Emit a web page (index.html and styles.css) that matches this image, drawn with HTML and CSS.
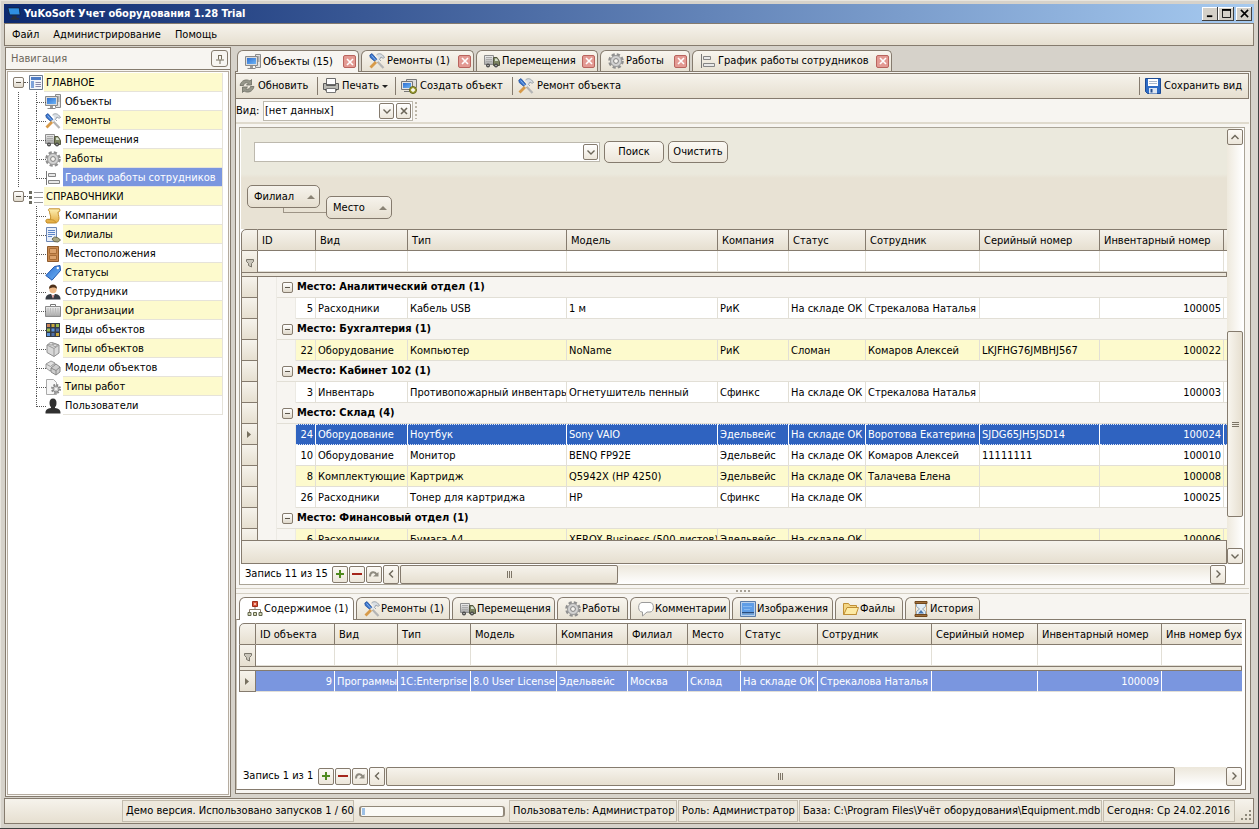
FILE: index.html
```html
<!DOCTYPE html>
<html lang="ru">
<head>
<meta charset="utf-8">
<title>YuKoSoft Учет оборудования 1.28 Trial</title>
<link rel="stylesheet" href="styles.css">
</head>
<body>
<svg class="defs" aria-hidden="true">
  <defs>
    <linearGradient id="g-blue" x1="0" y1="0" x2="1" y2="1"><stop offset="0" stop-color="#2f6fd0"/><stop offset="1" stop-color="#6db4f5"/></linearGradient>
    <linearGradient id="g-gray" x1="0" y1="0" x2="0" y2="1"><stop offset="0" stop-color="#f0f0f0"/><stop offset="1" stop-color="#a4a4a4"/></linearGradient>
    <linearGradient id="g-gold" x1="0" y1="0" x2="0" y2="1"><stop offset="0" stop-color="#fdf0b4"/><stop offset="1" stop-color="#e3a93c"/></linearGradient>
  </defs>
  <symbol id="i-objects" viewBox="0 0 16 16"><path d="M10.500 .5h5v13h-5z" fill="#e4e4e4" stroke="#8b8b8b"/><path d="M12 3h2.500M12 5h2.500M12 7h2.500" stroke="#777"/><path d="M.5 2.500h12v9H.5z" fill="#dcdcdc" stroke="#8a8a8a"/><path d="M2 4h9v6H2z" fill="url(#g-blue)"/><path d="M5 12h3v2H5z" fill="#999"/><path d="M2.500 14.500h8" stroke="#888"/></symbol>
  <symbol id="i-repair" viewBox="0 0 16 16"><path d="M14.500 15 5 5" stroke="#b4b4b4" stroke-width="2.200"/><path d="M.8 2 3 .6 8.500 7 6.500 9 1.200 4.500z" fill="#3672cc" stroke="#244f96" stroke-width=".7"/><path d="m2.500 2.500 4 4.500" stroke="#8db8ee"/><path d="M1.500 14.500 8 8" stroke="#d79a48" stroke-width="2.800"/><path d="m7 9 5-5" stroke="#dfe6ec" stroke-width="2.200"/><path d="M7.500 2c2-2 5.500-2 8 2.500l-1.500.8-2-1.300-1.500 2.500L12 8" fill="#d8dee4" stroke="#8c949c" stroke-width=".8"/></symbol>
  <symbol id="i-truck" viewBox="0 0 16 16"><path d="M.5 2.500h9v9h-9z" fill="url(#g-gray)" stroke="#8e8e8e"/><path d="M2 4.500h6M2 6.500h6M2 8.500h6" stroke="#aaa"/><path d="M9.500 4.500H13l2.500 4v4h-6z" fill="#7d8562" stroke="#53563f"/><path d="M11 5.500h2l1.300 2.500H11z" fill="#d8e2d0"/><circle cx="4" cy="12.500" r="2" fill="#444"/><circle cx="12" cy="12.500" r="2" fill="#444"/><circle cx="4" cy="12.500" r=".8" fill="#ccc"/><circle cx="12" cy="12.500" r=".8" fill="#ccc"/></symbol>
  <symbol id="i-gear" viewBox="0 0 16 16"><circle cx="8" cy="8" r="6.500" fill="none" stroke="#8f8f8f" stroke-width="2.600" stroke-dasharray="3.100 2.005"/><circle cx="8" cy="8" r="5.500" fill="#d2d2d2" stroke="#9a9a9a"/><circle cx="8" cy="8" r="2.400" fill="#f7f5f1" stroke="#808080"/></symbol>
  <symbol id="i-sched" viewBox="0 0 16 16"><path d="M1.500 1v14" stroke="#777"/><path d="M3.500 3.500h7v3h-7zM3.500 10.500h11v3h-11z" fill="#e8e8e8" stroke="#858585"/></symbol>
  <symbol id="i-main" viewBox="0 0 16 16"><path d="M1.500.500h13v14h-13z" fill="#f2f5fa" stroke="#6c7a8c"/><path d="M3 2h10v3H3z" fill="#4f7cc4"/><path d="M3 6h3v7H3z" fill="#7da2da"/><path d="M7.500 7.500H13M7.500 9.500H13M7.500 11.500H13" stroke="#88a"/></symbol>
  <symbol id="i-list" viewBox="0 0 16 16"><path d="M1 2h3v3H1zM1 7h3v3H1zM1 12h3v3H1z" fill="#6b6b60"/><path d="M6 3.500h9M6 8.500h9M6 13.500h9" stroke="#999"/></symbol>
  <symbol id="i-scroll" viewBox="0 0 16 16"><path d="M4 .8h10.500c1.200 2-.2 3.400-1.500 3.200 0 3 2 6 .5 8.500-.8 1.800-2 2.500-3 2.500H2c-1.700-1-1.300-3.500 0-3.700h3.500C6.500 8 4 5 4.500 3.200 3.300 3 3 1.500 4 .8z" fill="url(#g-gold)" stroke="#c48f2c"/><path d="M3 11.500c2 .5 7-.5 7.500 3" fill="none" stroke="#c48f2c"/></symbol>
  <symbol id="i-branch" viewBox="0 0 16 16"><path d="M1.500.5h10v14h-10z" fill="#e8effa" stroke="#6c86b4"/><path d="M3 3.500h7M3 5.500h7M3 7.500h7M3 9.500h4" stroke="#5d86c8"/><path d="m7 12 2.500-2 3 .5 3 2.500-2.500 2-4-.5z" fill="#a8a684" stroke="#6d6c4f"/></symbol>
  <symbol id="i-door" viewBox="0 0 16 16"><path d="M2.500.5h11v15h-11z" fill="#c98a51" stroke="#8f5a2b"/><path d="M4.500 2.500h7v5h-7zM4.500 9.500h7v4h-7z" fill="#dba26c" stroke="#a86c36"/></symbol>
  <symbol id="i-tag" viewBox="0 0 16 16"><path d="M.8 10.500 9.500 1.500l5.500-1 .5 5-8.500 9.700z" fill="url(#g-blue)" stroke="#2257ac"/><circle cx="12.800" cy="3" r="1.200" fill="#fff"/></symbol>
  <symbol id="i-person" viewBox="0 0 16 16"><path d="M.5 15.500c0-4 2-5 5-5.500h5c3 .5 5 1.500 5 5.500z" fill="#363b44"/><path d="m6 9.500 2 5 2-5z" fill="#fff"/><path d="m7.500 11 .5 4 .7-4z" fill="#b33"/><circle cx="8" cy="5.500" r="3.700" fill="#eeb988"/><path d="M4 5c-.5-6 8.500-6 8 0-1-2-6-2-8 0z" fill="#4d3019"/></symbol>
  <symbol id="i-case" viewBox="0 0 16 16"><path d="M5.500 4V1.500h5V4" fill="none" stroke="#777"/><path d="M.5 3.500h15v10H.5z" fill="url(#g-gray)" stroke="#8b8b8b"/><path d="M3 5v7M5.500 5v7M8 5v7M10.500 5v7M13 5v7" stroke="#bababa"/></symbol>
  <symbol id="i-kinds" viewBox="0 0 16 16"><path d="M1 1h14v14H1z" fill="#343c48"/><path d="M2 2h3v3H2z" fill="#cc8458"/><path d="M6.500 2h3v3h-3zM11 11h3v3h-3z" fill="#c9a83c"/><path d="M11 2h3v3h-3zM2 6.500h3v3H2z" fill="#9ab94c"/><path d="M6.500 6.500h3v3h-3zM2 11h3v3H2z" fill="#5d94dc"/><path d="M11 6.500h3v3h-3zM6.500 11h3v3h-3z" fill="#4f6fa8"/></symbol>
  <symbol id="i-brick" viewBox="0 0 16 16"><path d="m2 4 5-2.500L14 4v8l-5 3.500-7-4z" fill="#d8d8d8" stroke="#8d8d8d"/><path d="m2 4 7 3.500L14 4M9 7.500v8" fill="none" stroke="#9a9a9a"/><ellipse cx="6" cy="2.800" rx="2" ry="1.200" fill="#efefef" stroke="#999"/><ellipse cx="10" cy="4.200" rx="2" ry="1.200" fill="#efefef" stroke="#999"/></symbol>
  <symbol id="i-models" viewBox="0 0 16 16"><path d="m1 4 5-3 4 2v5l-5 3-4-3z" fill="#e0e0e0" stroke="#999"/><path d="m6 8 5-4 4 3v5l-4 3-5-3z" fill="#cdcdcd" stroke="#888"/><path d="m6 8 5 2.500L15 7M11 10.500V15" fill="none" stroke="#888"/><path d="m1 4 4.500 2.500L10 3" fill="none" stroke="#999"/></symbol>
  <symbol id="i-worktype" viewBox="0 0 16 16"><path d="M1.500.5h7l3 3v12h-10z" fill="#f6f6f6" stroke="#aaa"/><circle cx="11" cy="10" r="4" fill="none" stroke="#888" stroke-width="2" stroke-dasharray="1.700 1.450"/><circle cx="11" cy="10" r="3" fill="#ccc" stroke="#8b8b8b"/><circle cx="11" cy="10" r="1" fill="#fff"/></symbol>
  <symbol id="i-user" viewBox="0 0 16 16"><path d="M.5 15.500c-.3-4 2-5 5.500-5.500V8h4v2c3.500.5 5.800 1.500 5.500 5.500z" fill="#303030"/><ellipse cx="8" cy="5" rx="3.500" ry="4.500" fill="#303030"/></symbol>
  <symbol id="i-refresh" viewBox="0 0 16 16"><path d="M1 7.500C2 2.500 7 .5 11 3l1.500-1.500V7H7.500l1.700-1.700C7 4 5 5.500 4.500 7.500zM15 8.500c-1 5-6 7-10 4.500l-1.500 1.500V9h5l-1.700 1.700C9 12 11 10.500 11.500 8.500z" fill="#96968a" stroke="#6c6c62" stroke-width=".8"/></symbol>
  <symbol id="i-print" viewBox="0 0 16 16"><path d="M3.500.5h9v6h-9z" fill="#fdfdfd" stroke="#6b6b6b"/><path d="M.5 5.500h3v2h9v-2h3v6H.5z" fill="#b9b9b3" stroke="#5c5c5c"/><path d="M2 12h12" stroke="#333"/><path d="M3.500 10.500h9v4h-9z" fill="#fff" stroke="#777"/></symbol>
  <symbol id="i-create" viewBox="0 0 16 16"><path d="M5.500 1.500h10v8h-10z" fill="#ddd" stroke="#777"/><path d="M.5 3.500h11v8H.5z" fill="#e4e4e4" stroke="#777"/><path d="M2 5h8v5H2z" fill="url(#g-blue)"/><path d="M3 13.500h6" stroke="#777"/><circle cx="12" cy="12" r="3.500" fill="#a5a53c" stroke="#63661b"/><path d="M10 12h4M12 10v4" stroke="#fff" stroke-width="1.300"/></symbol>
  <symbol id="i-save" viewBox="0 0 16 16"><path d="M.5.5h15v15h-13l-2-2z" fill="#2f6cc4" stroke="#1c4a94"/><path d="M3 1h10v7H3z" fill="#fff"/><path d="M4 3.500h8M4 5.500h8" stroke="#a9b8cb"/><path d="M4 10h8v5.500H4z" fill="#dde6f2"/><path d="M5.500 11h2v3.500h-2z" fill="#234d8f"/></symbol>
  <symbol id="i-content" viewBox="0 0 16 16"><path d="M8 5v4M2.500 11V8.500h11V11" fill="none" stroke="#8a7a6a"/><path d="M5.500.5h5v5h-5z" fill="#d8543a" stroke="#9c2d1b"/><path d="M7 2h2v2H7z" fill="#f6b7a6"/><path d="M1 11.500h3v3H1zM6.500 11.500h3v3h-3zM12 11.500h3v3h-3z" fill="#d6d8b8" stroke="#62664c"/></symbol>
  <symbol id="i-comment" viewBox="0 0 16 16"><path d="M4 1.500h8c4.500 0 4.500 9.500 0 9.500H9l-4.500 4V11H4C-.5 11-.5 1.500 4 1.500z" fill="#fff" stroke="#9b9b9b"/></symbol>
  <symbol id="i-image" viewBox="0 0 16 16"><path d="M.5.500h15v15H.5z" fill="#b9d0ec" stroke="#5b7ca8"/><path d="M2 2h12v9H2z" fill="#5f9de6"/><path d="M2 11h12v1.500H2z" fill="#2a4c7c"/><path d="M2 12.500h12V14H2z" fill="#6fa4de"/><path d="M3 5.500h9M4 8.500h6" stroke="#86b8f0"/></symbol>
  <symbol id="i-folder" viewBox="0 0 16 16"><path d="M.5 13.500v-11h5l1.500 2h6.500v9z" fill="#f4d684" stroke="#c08f34"/><path d="M.8 13.500 4 6.500h11.500l-2.500 7z" fill="#fdeaa4" stroke="#c08f34"/></symbol>
  <symbol id="i-history" viewBox="0 0 16 16"><path d="M3.500 2.500v3l3 2.500-3 2.500v3h9v-3L9.500 8l3-2.500v-3z" fill="#e2edf6" stroke="#93a8b8"/><path d="M5 12.500 8 9l3 3.500z" fill="#4977ae"/><path d="M2 .5h12v2H2zM2 13.500h12v2H2z" fill="#a2713c" stroke="#70471d"/><path d="M2.500 3v10M13.500 3v10" stroke="#c3a27a"/></symbol>
  <symbol id="i-funnel" viewBox="0 0 8 9"><path d="M.5.500h7v2l-2 2v3.500l-3-1.500v-2l-2-2z" fill="#c9c5ba" stroke="#7b776c"/></symbol>
  <symbol id="i-x" viewBox="0 0 8 8"><path d="m1 1 6 6M7 1 1 7" stroke="currentColor" stroke-width="1.600"/></symbol>
  <symbol id="i-down" viewBox="0 0 8 8"><path d="m.500 2.500 3.500 3.500 3.500-3.500" fill="none" stroke="currentColor" stroke-width="1.400"/></symbol>
  <symbol id="i-up" viewBox="0 0 8 8"><path d="M.500 6 4 2.500 7.500 6" fill="none" stroke="currentColor" stroke-width="1.400"/></symbol>
  <symbol id="i-left" viewBox="0 0 8 8"><path d="M6 .500 2.500 4 6 7.500" fill="none" stroke="currentColor" stroke-width="1.400"/></symbol>
  <symbol id="i-right" viewBox="0 0 8 8"><path d="M2.500.500 6 4 2.500 7.500" fill="none" stroke="currentColor" stroke-width="1.400"/></symbol>
  <symbol id="i-plus" viewBox="0 0 10 10"><path d="M5 1v8M1 5h8" stroke="#4f8a1f" stroke-width="2"/></symbol>
  <symbol id="i-minus" viewBox="0 0 10 10"><path d="M0 5h10" stroke="#a5261c" stroke-width="2"/></symbol>
  <symbol id="i-redo" viewBox="0 0 10 10"><path d="M1 7.500c0-5 5-5.500 6.500-2" fill="none" stroke="#8f8b80" stroke-width="2"/><path d="M4 7.500h5.500V3z" fill="#8f8b80"/></symbol>
  <symbol id="i-pin" viewBox="0 0 10 10"><path d="M3.500 1v4.500M3 1.500h4M6.500 1v4.500M1 6h8M5 6v4" fill="none" stroke="#77705f"/></symbol>
  <symbol id="i-play" viewBox="0 0 5 7"><path d="M0 0v7l4-3.500z" fill="#77705f"/></symbol>
</svg>

<div class="window">
  <header class="titlebar">
    <svg class="app-icon" viewBox="0 0 16 16"><path d="M1 1h13l1 8H3z" fill="#2f8fe0" stroke="#12233d"/><path d="M6 10h5v3H6z" fill="#27303c"/><path d="M4 13.500h10" stroke="#27303c" stroke-width="2"/></svg>
    <h1 class="title">YuKoSoft Учет оборудования 1.28 Trial</h1>
    <div class="winbtns">
      <button class="winbtn" aria-label="Свернуть"><svg viewBox="0 0 10 10"><path d="M1 8h6" stroke="#000" stroke-width="2"/></svg></button>
      <button class="winbtn" aria-label="Развернуть"><svg viewBox="0 0 10 10"><path d="M.5 1h9v8.500h-9z" fill="none" stroke="#000"/><path d="M0 1h10" stroke="#000" stroke-width="2"/></svg></button>
      <button class="winbtn winbtn-close" aria-label="Закрыть"><svg viewBox="0 0 10 10"><path d="m1 1 8 8M9 1 1 9" stroke="#000" stroke-width="1.700"/></svg></button>
    </div>
  </header>

  <nav class="menubar">
    <button class="menu-item">Файл</button><button class="menu-item">Администрирование</button><button class="menu-item">Помощь</button>
  </nav>

  <div class="main">
    <aside class="nav">
      <div class="nav-head"><span>Навигация</span><button class="pin" aria-label="Закрепить"><svg><use href="#i-pin"/></svg></button></div>
      <div class="nav-body">
        <ul class="tree">
          <li class="branch">
            <div class="root alt"><button class="toggle" aria-label="Свернуть"></button><i class="dots"></i><svg class="icon"><use href="#i-main"/></svg><span class="label">ГЛАВНОЕ</span></div>
            <ul class="leaves">
              <li class="leaf"><svg class="icon"><use href="#i-objects"/></svg><a class="label" href="#">Объекты</a></li>
              <li class="leaf alt"><svg class="icon"><use href="#i-repair"/></svg><a class="label" href="#">Ремонты</a></li>
              <li class="leaf"><svg class="icon"><use href="#i-truck"/></svg><a class="label" href="#">Перемещения</a></li>
              <li class="leaf alt"><svg class="icon"><use href="#i-gear"/></svg><a class="label" href="#">Работы</a></li>
              <li class="leaf current"><svg class="icon"><use href="#i-sched"/></svg><a class="label" href="#">График работы сотрудников</a></li>
            </ul>
          </li>
          <li class="branch">
            <div class="root alt"><button class="toggle" aria-label="Свернуть"></button><i class="dots"></i><svg class="icon"><use href="#i-list"/></svg><span class="label">СПРАВОЧНИКИ</span></div>
            <ul class="leaves">
              <li class="leaf"><svg class="icon"><use href="#i-scroll"/></svg><a class="label" href="#">Компании</a></li>
              <li class="leaf alt"><svg class="icon"><use href="#i-branch"/></svg><a class="label" href="#">Филиалы</a></li>
              <li class="leaf"><svg class="icon"><use href="#i-door"/></svg><a class="label" href="#">Местоположения</a></li>
              <li class="leaf alt"><svg class="icon"><use href="#i-tag"/></svg><a class="label" href="#">Статусы</a></li>
              <li class="leaf"><svg class="icon"><use href="#i-person"/></svg><a class="label" href="#">Сотрудники</a></li>
              <li class="leaf alt"><svg class="icon"><use href="#i-case"/></svg><a class="label" href="#">Организации</a></li>
              <li class="leaf"><svg class="icon"><use href="#i-kinds"/></svg><a class="label" href="#">Виды объектов</a></li>
              <li class="leaf alt"><svg class="icon"><use href="#i-brick"/></svg><a class="label" href="#">Типы объектов</a></li>
              <li class="leaf"><svg class="icon"><use href="#i-models"/></svg><a class="label" href="#">Модели объектов</a></li>
              <li class="leaf alt"><svg class="icon"><use href="#i-worktype"/></svg><a class="label" href="#">Типы работ</a></li>
              <li class="leaf"><svg class="icon"><use href="#i-user"/></svg><a class="label" href="#">Пользователи</a></li>
            </ul>
          </li>
        </ul>
      </div>
    </aside>

    <main class="work">
      <div class="tabs">
        <div class="tab active w-objects"><button class="tab-btn"><svg class="icon"><use href="#i-objects"/></svg>Объекты (15)</button><button class="tab-x" aria-label="Закрыть"><svg><use href="#i-x"/></svg></button></div>
        <div class="tab w-repairs"><button class="tab-btn"><svg class="icon"><use href="#i-repair"/></svg>Ремонты (1)</button><button class="tab-x" aria-label="Закрыть"><svg><use href="#i-x"/></svg></button></div>
        <div class="tab w-moves"><button class="tab-btn"><svg class="icon"><use href="#i-truck"/></svg>Перемещения</button><button class="tab-x" aria-label="Закрыть"><svg><use href="#i-x"/></svg></button></div>
        <div class="tab w-works"><button class="tab-btn"><svg class="icon"><use href="#i-gear"/></svg>Работы</button><button class="tab-x" aria-label="Закрыть"><svg><use href="#i-x"/></svg></button></div>
        <div class="tab w-sched"><button class="tab-btn"><svg class="icon"><use href="#i-sched"/></svg>График работы сотрудников</button><button class="tab-x" aria-label="Закрыть"><svg><use href="#i-x"/></svg></button></div>
      </div>

      <div class="panel">
        <div class="toolbar">
          <button class="tool w-refresh"><svg class="icon"><use href="#i-refresh"/></svg>Обновить</button>
          <button class="tool w-print"><svg class="icon"><use href="#i-print"/></svg>Печать<i class="caret"></i></button>
          <button class="tool w-create"><svg class="icon"><use href="#i-create"/></svg>Создать объект</button>
          <button class="tool tool-last"><svg class="icon"><use href="#i-repair"/></svg>Ремонт объекта</button>
          <button class="tool tool-save"><svg class="icon"><use href="#i-save"/></svg>Сохранить вид</button>
        </div>
        <div class="viewbar">
          <label for="view">Вид:</label>
          <div class="combo combo-view"><input id="view" value="[нет данных]"><button class="mini" aria-label="Открыть"><svg><use href="#i-down"/></svg></button><button class="mini" aria-label="Очистить"><svg><use href="#i-x"/></svg></button></div>
          <i class="grip"></i>
        </div>

        <section class="objects">
          <div class="objects-row">
            <div class="grid">
              <div class="finder">
                <div class="search">
                  <div class="combo combo-search"><input aria-label="Поиск"><button class="mini" aria-label="Открыть"><svg><use href="#i-down"/></svg></button></div>
                  <button class="push">Поиск</button><button class="push">Очистить</button>
                </div>
                <div class="groups">
                  <button class="chip chip-a">Филиал<i class="sort"></i></button><i class="link"></i><button class="chip chip-b">Место<i class="sort"></i></button>
                </div>
              </div>
              <div class="table-clip table-head">
                <table class="table">
                  <colgroup><col class="c-ind"><col class="c-58"><col class="c-92"><col class="c-159"><col class="c-151"><col class="c-71"><col class="c-77"><col class="c-114"><col class="c-120"><col class="c-124"><col></colgroup>
                  <thead>
                    <tr><th class="corner"></th><th>ID</th><th>Вид</th><th>Тип</th><th>Модель</th><th>Компания</th><th>Статус</th><th>Сотрудник</th><th>Серийный номер</th><th>Инвентарный номер</th><th></th></tr>
                    <tr class="filter"><td class="ind"><svg class="funnel"><use href="#i-funnel"/></svg></td><td></td><td></td><td></td><td></td><td></td><td></td><td></td><td></td><td></td><td></td></tr>
                  </thead>
                </table>
              </div>
              <div class="rule"></div>
              <div class="table-clip table-body">
                <table class="table">
                  <colgroup><col class="c-ind"><col class="c-19"><col class="c-19"><col class="c-20"><col class="c-92"><col class="c-159"><col class="c-151"><col class="c-71"><col class="c-77"><col class="c-114"><col class="c-120"><col class="c-124"><col></colgroup>
                  <tbody>
                    <tr class="group"><td class="ind"></td><td class="pad"></td><td class="gcell" colspan="11"><div class="ghead"><button class="toggle" aria-label="Свернуть"></button>Место: Аналитический отдел (1)</div></td></tr>
                    <tr><td class="ind"></td><td class="pad"></td><td class="pad"></td><td class="num">5</td><td>Расходники</td><td>Кабель USB</td><td>1 м</td><td>РиК</td><td>На складе ОК</td><td>Стрекалова Наталья</td><td></td><td class="num">100005</td><td></td></tr>
                    <tr class="group"><td class="ind"></td><td class="pad"></td><td class="gcell" colspan="11"><div class="ghead"><button class="toggle" aria-label="Свернуть"></button>Место: Бухгалтерия (1)</div></td></tr>
                    <tr class="odd"><td class="ind"></td><td class="pad"></td><td class="pad"></td><td class="num">22</td><td>Оборудование</td><td>Компьютер</td><td>NoName</td><td>РиК</td><td>Сломан</td><td>Комаров Алексей</td><td>LKJFHG76JMBHJ567</td><td class="num">100022</td><td></td></tr>
                    <tr class="group"><td class="ind"></td><td class="pad"></td><td class="gcell" colspan="11"><div class="ghead"><button class="toggle" aria-label="Свернуть"></button>Место: Кабинет 102 (1)</div></td></tr>
                    <tr><td class="ind"></td><td class="pad"></td><td class="pad"></td><td class="num">3</td><td>Инвентарь</td><td>Противопожарный инвентарь</td><td>Огнетушитель пенный</td><td>Сфинкс</td><td>На складе ОК</td><td>Стрекалова Наталья</td><td></td><td class="num">100003</td><td></td></tr>
                    <tr class="group"><td class="ind"></td><td class="pad"></td><td class="gcell" colspan="11"><div class="ghead"><button class="toggle" aria-label="Свернуть"></button>Место: Склад (4)</div></td></tr>
                    <tr class="selected"><td class="ind"><svg class="play"><use href="#i-play"/></svg></td><td class="pad"></td><td class="pad"></td><td class="num">24</td><td>Оборудование</td><td>Ноутбук</td><td>Sony VAIO</td><td>Эдельвейс</td><td>На складе ОК</td><td>Воротова Екатерина</td><td>SJDG65JH5JSD14</td><td class="num">100024</td><td></td></tr>
                    <tr><td class="ind"></td><td class="pad"></td><td class="pad"></td><td class="num">10</td><td>Оборудование</td><td>Монитор</td><td>BENQ FP92E</td><td>Эдельвейс</td><td>На складе ОК</td><td>Комаров Алексей</td><td>11111111</td><td class="num">100010</td><td></td></tr>
                    <tr class="odd"><td class="ind"></td><td class="pad"></td><td class="pad"></td><td class="num">8</td><td>Комплектующие</td><td>Картридж</td><td>Q5942X (HP 4250)</td><td>Эдельвейс</td><td>На складе ОК</td><td>Талачева Елена</td><td></td><td class="num">100008</td><td></td></tr>
                    <tr><td class="ind"></td><td class="pad"></td><td class="pad"></td><td class="num">26</td><td>Расходники</td><td>Тонер для картриджа</td><td>HP</td><td>Сфинкс</td><td>На складе ОК</td><td></td><td></td><td class="num">100025</td><td></td></tr>
                    <tr class="group"><td class="ind"></td><td class="pad"></td><td class="gcell" colspan="11"><div class="ghead"><button class="toggle" aria-label="Свернуть"></button>Место: Финансовый отдел (1)</div></td></tr>
                    <tr class="odd"><td class="ind"></td><td class="pad"></td><td class="pad"></td><td class="num">6</td><td>Расходники</td><td>Бумага A4</td><td>XEROX Business (500 листов)</td><td>Эдельвейс</td><td>На складе ОК</td><td></td><td></td><td class="num">100006</td><td></td></tr>
                  </tbody>
                </table>
              </div>
              <div class="footer-band"></div>
            </div>
            <div class="vscroll">
              <button class="arrow" aria-label="Вверх"><svg><use href="#i-up"/></svg></button>
              <div class="vtrack"><div class="vthumb"></div></div>
              <button class="arrow" aria-label="Вниз"><svg><use href="#i-down"/></svg></button>
            </div>
          </div>
          <div class="record record-top">
            <span class="record-label">Запись 11 из 15</span>
            <button class="step" aria-label="Добавить"><svg><use href="#i-plus"/></svg></button><button class="step" aria-label="Удалить"><svg><use href="#i-minus"/></svg></button><button class="step" aria-label="Повторить"><svg><use href="#i-redo"/></svg></button>
            <button class="arrow" aria-label="Влево"><svg><use href="#i-left"/></svg></button>
            <div class="htrack"><div class="hthumb hthumb-top"></div></div>
            <button class="arrow" aria-label="Вправо"><svg><use href="#i-right"/></svg></button>
          </div>
        </section>

        <div class="splitter"><i></i><i></i><i></i><i></i></div>

        <section class="details">
          <div class="tabs tabs-bottom">
            <div class="tab active b-content"><button class="tab-btn"><svg class="icon"><use href="#i-content"/></svg>Содержимое (1)</button></div>
            <div class="tab b-repairs"><button class="tab-btn"><svg class="icon"><use href="#i-repair"/></svg>Ремонты (1)</button></div>
            <div class="tab b-moves"><button class="tab-btn"><svg class="icon"><use href="#i-truck"/></svg>Перемещения</button></div>
            <div class="tab b-works"><button class="tab-btn"><svg class="icon"><use href="#i-gear"/></svg>Работы</button></div>
            <div class="tab b-comments"><button class="tab-btn"><svg class="icon"><use href="#i-comment"/></svg>Комментарии</button></div>
            <div class="tab b-images"><button class="tab-btn"><svg class="icon"><use href="#i-image"/></svg>Изображения</button></div>
            <div class="tab b-files"><button class="tab-btn"><svg class="icon"><use href="#i-folder"/></svg>Файлы</button></div>
            <div class="tab b-history"><button class="tab-btn"><svg class="icon"><use href="#i-history"/></svg>История</button></div>
          </div>
          <div class="details-box">
            <div class="details-grid">
              <div class="table-clip table-head">
                <table class="table">
                  <colgroup><col class="c-ind"><col class="c-79"><col class="c-63"><col class="c-73"><col class="c-86"><col class="c-71"><col class="c-60"><col class="c-53"><col class="c-77"><col class="c-114"><col class="c-106"><col class="c-124"><col></colgroup>
                  <thead>
                    <tr><th class="corner"></th><th>ID объекта</th><th>Вид</th><th>Тип</th><th>Модель</th><th>Компания</th><th>Филиал</th><th>Место</th><th>Статус</th><th>Сотрудник</th><th>Серийный номер</th><th>Инвентарный номер</th><th>Инв номер бухгалтерии</th></tr>
                    <tr class="filter"><td class="ind"><svg class="funnel"><use href="#i-funnel"/></svg></td><td></td><td></td><td></td><td></td><td></td><td></td><td></td><td></td><td></td><td></td><td></td><td></td></tr>
                  </thead>
                </table>
              </div>
              <div class="rule"></div>
              <div class="table-clip table-body plain">
                <table class="table">
                  <colgroup><col class="c-ind"><col class="c-79"><col class="c-63"><col class="c-73"><col class="c-86"><col class="c-71"><col class="c-60"><col class="c-53"><col class="c-77"><col class="c-114"><col class="c-106"><col class="c-124"><col></colgroup>
                  <tbody>
                    <tr class="focused"><td class="ind"><svg class="play"><use href="#i-play"/></svg></td><td class="num">9</td><td>Программы</td><td>1C:Enterprise</td><td>8.0 User License</td><td>Эдельвейс</td><td>Москва</td><td>Склад</td><td>На складе ОК</td><td>Стрекалова Наталья</td><td></td><td class="num">100009</td><td></td></tr>
                  </tbody>
                </table>
              </div>
              <div class="record record-bottom">
                <span class="record-label">Запись 1 из 1</span>
                <button class="step" aria-label="Добавить"><svg><use href="#i-plus"/></svg></button><button class="step" aria-label="Удалить"><svg><use href="#i-minus"/></svg></button><button class="step" aria-label="Повторить"><svg><use href="#i-redo"/></svg></button>
                <button class="arrow" aria-label="Влево"><svg><use href="#i-left"/></svg></button>
                <div class="htrack"><div class="hthumb hthumb-bottom"></div></div>
                <button class="arrow" aria-label="Вправо"><svg><use href="#i-right"/></svg></button>
              </div>
            </div>
          </div>
        </section>
      </div>
    </main>
  </div>

  <footer class="status">
    <span class="cell s-demo">Демо версия. Использовано запусков 1 / 60</span>
    <span class="progress"><i></i></span>
    <span class="cell s-user">Пользователь: Администратор</span>
    <span class="cell s-role">Роль: Администратор</span>
    <span class="cell s-base">База: C:\Program Files\Учёт оборудования\Equipment.mdb</span>
    <span class="cell s-date">Сегодня: Ср 24.02.2016</span>
    <svg class="sizer" viewBox="0 0 12 12"><path d="M9 1h2v2H9zM5 5h2v2H5zM9 5h2v2H9zM1 9h2v2H1zM5 9h2v2H5zM9 9h2v2H9z" fill="#8d887a"/></svg>
  </footer>
</div>
</body>
</html>
```

FILE: styles.css
```css
:root {
  --line: #857b6e;
  --soft: #d9d5cb;
  --face: #ece7db;
  --pale: #f7f5f1;
  --grad: linear-gradient(#f6f3ec, #e6dfd0);
  --yellow: #fdfacd;
}

* { box-sizing: border-box; }

html, body { height: 100%; margin: 0; }

body, button, input, table {
  font-family: "DejaVu Sans Condensed", "DejaVu Sans", sans-serif;
  font-size: 11px;
  line-height: 14px;
  color: #000;
}

button { margin: 0; padding: 0; border: 0; background: none; white-space: nowrap; }
ul { margin: 0; padding: 0; list-style: none; }
a { color: inherit; text-decoration: none; }
.defs { position: absolute; width: 0; height: 0; }
.icon { width: 16px; height: 16px; flex: none; }

.window {
  display: flex;
  flex-direction: column;
  height: 100vh;
  padding: 4px 5px 5px 4px;
  background: #d6d2ca;
  box-shadow: inset -1px -1px #404040, inset 1px 1px #e8e5de;
  overflow: hidden;
}

/* Title bar */
.titlebar {
  display: flex;
  align-items: center;
  flex: none;
  height: 19px;
  padding: 0 2px 0 3px;
  background: linear-gradient(90deg, #0d2a70, #a6caf0);
}
.app-icon { width: 14px; height: 14px; margin-right: 3px; }
.title { flex: 1; margin: 0; font-size: 11px; font-weight: bold; color: #fff; }
.winbtns { display: flex; }
.winbtn {
  display: grid;
  place-items: center;
  width: 16px;
  height: 14px;
  background: #d4d0c8;
  box-shadow: inset -1px -1px #404040, inset 1px 1px #fff;
}
.winbtn svg { width: 9px; height: 9px; }
.winbtn-close { margin-left: 2px; }

/* Menu */
.menubar {
  display: flex;
  flex: none;
  height: 23px;
  padding: 0 7px;
  gap: 14px;
  background: var(--grad);
  border: 1px solid var(--line);
}

/* Main split */
.main {
  display: grid;
  grid-template-columns: 226px minmax(0, 1fr);
  gap: 4px;
  flex: 1;
  min-height: 0;
  padding: 1px 3px 1px 1px;
}

/* Navigation */
.nav {
  display: flex;
  flex-direction: column;
  min-height: 0;
  border: 1px solid var(--line);
  background: var(--pale);
}
.nav-head {
  display: flex;
  align-items: center;
  justify-content: space-between;
  flex: none;
  height: 22px;
  padding: 0 2px 0 5px;
  color: #6d675c;
  border-bottom: 1px solid var(--line);
}
.pin {
  display: grid;
  place-items: center;
  width: 17px;
  height: 17px;
  border: 1px solid var(--line);
  border-radius: 3px;
}
.pin svg { width: 10px; height: 10px; }
.nav-body {
  flex: 1;
  margin: 1px;
  padding: 1px 5px 0 4px;
  background: #fff;
  border: 1px solid #b5aca0;
}
.root, .leaf { display: flex; align-items: center; height: 19px; }
.root .label, .leaf .label {
  flex: 1;
  height: 19px;
  padding: 1px 2px 0;
  line-height: 17px;
  white-space: nowrap;
  border-bottom: 1px solid #e6e3da;
  border-right: 1px solid #e6e3da;
}
.alt .label { background: var(--yellow); }
.current .label { background: #7a96df; color: #fff; }
.dots { width: 4px; border-top: 1px dotted #555; }
.leaf { position: relative; padding-left: 33px; }
.leaf .icon { margin-right: 2px; }
.leaf::before {
  content: "";
  position: absolute;
  left: 24px;
  top: 0;
  width: 9px;
  height: 10px;
  border: dotted #555;
  border-width: 0 0 1px 1px;
}
.leaf:not(:last-child)::after {
  content: "";
  position: absolute;
  left: 24px;
  top: 10px;
  height: 9px;
  border-left: 1px dotted #555;
}
.branch:first-child .leaves { background: linear-gradient(#555 50%, transparent 50%) 6px 0 / 1px 2px repeat-y; }
.toggle {
  display: grid;
  place-items: center;
  flex: none;
  width: 11px;
  height: 11px;
  background: linear-gradient(#fff, #e0d9cb);
  border: 1px solid var(--line);
  border-radius: 2px;
}
.toggle::before { content: ""; width: 5px; height: 1px; background: #5c564b; }
.root .toggle { margin-left: 1px; }

/* Tabs */
.work { display: flex; flex-direction: column; min-width: 0; min-height: 0; padding: 3px 0; }
.tabs { display: flex; flex: none; gap: 2px; height: 21px; padding-left: 2px; }
.tab {
  display: flex;
  align-items: center;
  flex: none;
  padding: 0 2px 0 7px;
  background: linear-gradient(#f8f5ee, #e8e2d4);
  border: 1px solid var(--line);
  border-bottom: 0;
  border-radius: 6px 5px 0 0;
}
.tab.active { position: relative; margin-bottom: -1px; background: var(--pale); }
.tab-btn { display: flex; align-items: center; flex: 1; gap: 2px; }
.tab-x {
  display: grid;
  place-items: center;
  width: 13px;
  height: 13px;
  color: #fff;
  background: #e39a93;
  border: 1px solid #b9645e;
  border-radius: 2px;
}
.tab-x svg { width: 8px; height: 8px; }
.w-objects { width: 122px; }
.w-repairs { width: 113px; }
.w-moves { width: 122px; }
.w-works { width: 90px; }
.w-sched { width: 200px; }

.panel {
  display: flex;
  flex-direction: column;
  flex: 1;
  min-height: 0;
  padding: 1px 1px 3px 0;
  background: var(--pale);
  border: 1px solid var(--line);
}

/* Toolbar */
.toolbar {
  display: flex;
  align-items: center;
  flex: none;
  height: 26px;
  padding: 0 6px 0 3px;
  background: var(--grad);
  border: 1px solid var(--line);
  border-left: 0;
}
.tool { display: flex; align-items: center; gap: 3px; height: 18px; padding-left: 5px; border-left: 1px solid var(--line); }
.tool:first-child { padding-left: 0; border-left: 0; }
.w-refresh { width: 78px; }
.w-print { width: 78px; }
.w-create { width: 117px; }
.tool-save { margin-left: auto; }
.caret { border: 3px solid transparent; border-top-color: #222; border-bottom: 0; }

.viewbar {
  display: flex;
  align-items: center;
  flex: none;
  height: 25px;
  border-bottom: 2px solid #dfdacd;
}
.viewbar label { width: 27px; }
.combo {
  display: flex;
  align-items: center;
  gap: 2px;
  height: 20px;
  padding-right: 1px;
  background: #fff;
  border: 1px solid #bdb9ae;
}
.combo input { flex: 1; min-width: 0; height: 16px; padding: 0 1px; border: 0; outline: 0; background: none; }
.combo-view { width: 150px; }
.combo-search { width: 346px; }
.mini {
  display: grid;
  place-items: center;
  width: 15px;
  height: 16px;
  color: #6c6659;
  background: linear-gradient(#fff, #ece6da);
  border: 1px solid var(--line);
  border-radius: 2px;
}
.mini svg, .arrow svg { width: 8px; height: 8px; }
.grip { width: 2px; height: 17px; margin-left: 2px; background: linear-gradient(#bdb7a9 50%, transparent 50%) 0 0 / 2px 4px; }

/* Objects grid */
.objects {
  display: flex;
  flex-direction: column;
  flex: 1;
  min-height: 0;
  margin: 3px 4px 0 3px;
  padding: 0 1px;
  background: #fff;
  border: 1px solid #aaa497;
}
.objects-row { display: flex; flex: 1; min-height: 0; }
.grid { display: flex; flex-direction: column; flex: 1; min-width: 0; }
.finder {
  flex: none;
  height: 101px;
  padding: 13px 13px 0 6px;
  background: linear-gradient(#ebe9dd 0, #ebe9dd 46px, #e8e2d4 50px);
}
.search { display: flex; align-items: center; gap: 4px; padding-left: 7px; }
.push {
  width: 60px;
  height: 22px;
  background: linear-gradient(#fbf9f4, #ece6da);
  border: 1px solid var(--line);
  border-radius: 5px;
}
.groups { display: flex; padding-top: 22px; }
.chip {
  display: flex;
  align-items: center;
  justify-content: space-between;
  height: 23px;
  padding: 0 4px 0 6px;
  background: var(--grad);
  border: 1px solid var(--line);
  border-radius: 5px;
}
.chip-a { width: 73px; }
.chip-b { width: 66px; margin-top: 11px; }
.sort { border: 4px solid transparent; border-top: 0; border-bottom-color: #8a8375; }
.link { width: 43px; height: 5px; margin: 23px 0 0 -37px; border: 1px solid #9d9486; border-width: 0 0 1px 1px; }
.link + .chip { position: relative; }

.table-clip { flex: none; overflow: hidden; }
.table-body { flex: 1; min-height: 0; background: var(--pale); }
.table-body.plain { background: #fff; }
.table { width: 100%; table-layout: fixed; border-collapse: separate; border-spacing: 0; }
.c-ind { width: 17px; }
.c-19 { width: 19px; }
.c-20 { width: 20px; }
.c-53 { width: 53px; }
.c-58 { width: 58px; }
.c-60 { width: 60px; }
.c-63 { width: 63px; }
.c-71 { width: 71px; }
.c-73 { width: 73px; }
.c-77 { width: 77px; }
.c-79 { width: 79px; }
.c-86 { width: 86px; }
.c-92 { width: 92px; }
.c-106 { width: 106px; }
.c-114 { width: 114px; }
.c-120 { width: 120px; }
.c-124 { width: 124px; }
.c-151 { width: 151px; }
.c-159 { width: 159px; }
.table th {
  height: 22px;
  padding: 2px 0 0 4px;
  font-weight: normal;
  text-align: left;
  white-space: nowrap;
  overflow: hidden;
  background: var(--grad);
  border: 1px solid var(--line);
  border-width: 1px 1px 1px 0;
}
.table th:last-child, .table td:last-child { border-right: 0; }
.table th.corner { border-left-width: 1px; border-top-left-radius: 5px; }
.table td {
  height: 21px;
  padding: 1px 2px 0;
  white-space: nowrap;
  overflow: hidden;
  background: #fff;
  border: 1px solid #e2dfd6;
  border-width: 0 1px 1px 0;
}
.table td.ind {
  padding: 0;
  text-align: center;
  background: var(--grad);
  border: 1px solid var(--line);
  border-width: 0 1px 1px 1px;
}
.filter td.ind { border-bottom: 0; }
.funnel { display: block; width: 8px; height: 9px; margin: 3px auto 0; }
.play { display: block; width: 5px; height: 7px; margin: 0 auto; }
.table td.num { text-align: right; }
.table td.pad { background: var(--pale); border-bottom: 0; border-right-color: #eceae4; }
.table .odd td:not(.ind):not(.pad) { background: var(--yellow); }
.table td.gcell { padding: 0 0 0 5px; font-weight: bold; background: var(--pale); }
.ghead { display: flex; align-items: center; gap: 4px; }
.table .selected td:not(.ind):not(.pad) {
  color: #fff;
  background: #2f63c0;
  border-right-color: #fff;
  border-top: 1px dotted #dfe8fa;
  border-bottom: 1px dotted #dfe8fa;
}
.table .focused td:not(.ind) { color: #fff; background: #7a96df; border-right-color: #fff; }
.rule { flex: none; height: 5px; background: var(--face); border: 1px solid var(--line); }
.footer-band { flex: none; height: 24px; background: var(--grad); border: 1px solid var(--line); }

/* Scroll bars */
.vscroll { display: flex; flex-direction: column; flex: none; width: 16px; padding-top: 1px; background: linear-gradient(90deg, #eee9dd, #fff); }
.arrow {
  display: grid;
  place-items: center;
  flex: none;
  width: 16px;
  height: 16px;
  color: #6c6659;
  background: linear-gradient(#fcfaf6, #ece6da);
  border: 1px solid var(--line);
  border-radius: 2px;
}
.vtrack { flex: 1; display: flex; flex-direction: column; justify-content: flex-end; padding-bottom: 31px; }
.vthumb, .hthumb { display: grid; place-items: center; border: 1px solid var(--line); border-radius: 2px; }
.vthumb { height: 50%; background: linear-gradient(90deg, #f8f5ee, #e6dfd0); }
.vthumb::before { content: ""; width: 7px; height: 5px; background: linear-gradient(#7d7567 50%, transparent 50%) 0 0 / 7px 2px; }
.record { display: flex; align-items: center; flex: none; height: 20px; }
.record-label { flex: none; white-space: nowrap; }
.record-top { padding-right: 17px; }
.record-top .record-label { width: 91px; padding-left: 4px; }
.record-bottom .record-label { width: 79px; padding-left: 4px; }
.record .arrow { height: 19px; }
.step {
  display: grid;
  place-items: center;
  flex: none;
  width: 16px;
  height: 17px;
  margin-right: 1px;
  background: linear-gradient(#fcfaf6, #ece6da);
  border: 1px solid var(--line);
  border-radius: 2px;
}
.step svg { width: 10px; height: 10px; }
.htrack { display: flex; flex: 1; height: 19px; padding: 0 1px; background: linear-gradient(#ece7db, #fff); }
.hthumb { background: var(--grad); }
.hthumb::before { content: ""; width: 5px; height: 7px; background: linear-gradient(90deg, #7d7567 50%, transparent 50%) 0 0 / 2px 7px; }
.hthumb-top { width: 27%; }
.hthumb-bottom { width: 94%; }

.splitter {
  display: flex;
  justify-content: center;
  align-items: center;
  gap: 2px;
  flex: none;
  height: 6px;
  margin: 3px 0;
  border: 1px solid #d5d0c4;
  border-width: 1px 0;
}
.splitter i { width: 2px; height: 2px; background: #a8a296; }

/* Details */
.details { display: flex; flex-direction: column; flex: none; height: 193px; }
.tabs-bottom { height: 22px; padding-left: 3px; }
.tabs-bottom .tab { padding: 0 0 0 7px; }
.tabs-bottom .tab-btn { gap: 1px; }
.tabs-bottom .active { background: #fff; }
.b-content { width: 115px; }
.b-repairs { width: 94px; }
.b-moves { width: 103px; }
.b-works { width: 71px; }
.b-comments { width: 100px; }
.b-images { width: 101px; }
.b-files { width: 68px; }
.b-history { width: 75px; }
.details-box { flex: 1; min-height: 0; margin-right: 3px; padding: 3px 3px 3px 2px; background: #fff; border: 1px solid var(--line); border-left-color: #c9c2b5; }
.details-grid { display: flex; flex-direction: column; height: 100%; }

/* Status bar */
.status {
  display: flex;
  align-items: center;
  justify-content: flex-end;
  flex: none;
  height: 26px;
  gap: 1px;
  padding-right: 1px;
  background: var(--grad);
  border: 1px solid var(--line);
}
.cell { flex: none; height: 22px; padding: 3px; white-space: nowrap; background: #ede8dc; border: 1px solid #c3bcae; }
.progress {
  width: 146px;
  height: 11px;
  margin: 0 3px 0 4px;
  padding: 1px;
  background: #fbfaf6;
  border: 2px solid #918879;
  border-width: 1px 2px;
  border-radius: 3px;
}
.progress i { display: block; width: 3px; height: 100%; background: #9dc0e6; }
.s-demo { width: 232px; }
.s-user { width: 168px; }
.s-role { width: 120px; }
.s-base { width: 303px; }
.s-date { width: 132px; }
.sizer { width: 12px; height: 12px; margin: 8px 0 0 4px; }
```
